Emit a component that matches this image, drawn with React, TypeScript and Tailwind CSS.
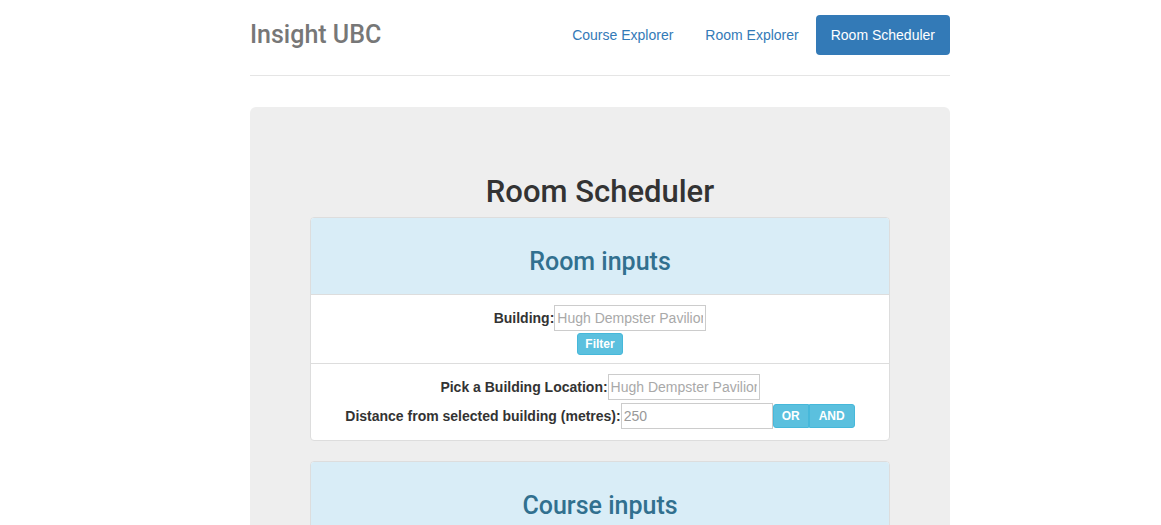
const navLinks = ["Course Explorer", "Room Explorer", "Room Scheduler"];

const headingFont = { fontFamily: 'Roboto, "Liberation Sans", Arial, sans-serif' };

function InfoButton({ label, className }: { label: string; className?: string }) {
  return (
    <button
      type="button"
      className={`bg-[#5bc0de] text-white font-bold text-[12px] leading-none border border-[#46b8da] ${className ?? ""}`}
    >
      {label}
    </button>
  );
}

function TextInput({ placeholder, value }: { placeholder?: string; value?: string }) {
  return (
    <input
      type="text"
      readOnly
      placeholder={placeholder}
      defaultValue={value}
      className="w-[152px] h-[26px] px-[2px] border border-[#ccc] text-[14px] text-[#999] placeholder:text-[#a9a9a9] bg-white outline-none"
    />
  );
}

function Panel({ title, children }: { title: string; children?: React.ReactNode }) {
  return (
    <div className="bg-white border border-[#ddd] rounded-[4px] overflow-hidden">
      <div className="bg-[#d9edf7] border-b border-[#ddd] pt-[30px] pb-[19px] text-center">
        <h3 className="text-[25px] leading-[27px] font-medium text-[#31708f]" style={headingFont}>
          {title}
        </h3>
      </div>
      {children}
    </div>
  );
}

export default function App() {
  return (
    <div
      className="min-h-screen bg-white text-[#333] text-[14px]"
      style={{ fontFamily: '"Liberation Sans", Arial, sans-serif' }}
    >
      <div className="ml-[250px] w-[700px]">
        <header className="flex items-center justify-between pt-[15px] pb-[20px] border-b border-[#e5e5e5]">
          <h3 className="text-[25px] leading-[40px] font-medium text-[#777]" style={headingFont}>
            Insight UBC
          </h3>
          <nav className="flex gap-[2px]">
            {navLinks.map((link, i) =>
              i === navLinks.length - 1 ? (
                <a
                  key={link}
                  className="h-[40px] px-[15px] flex items-center rounded-[4px] bg-[#337ab7] text-white"
                >
                  {link}
                </a>
              ) : (
                <a key={link} className="h-[40px] px-[15px] flex items-center text-[#337ab7]">
                  {link}
                </a>
              )
            )}
          </nav>
        </header>

        <main className="mt-[31px] bg-[#eee] rounded-[6px] px-[60px] pt-[48px] pb-[48px]">
          <h2
            className="mt-[20px] mb-[9px] text-[31px] leading-[33px] font-medium text-center text-[#333]"
            style={headingFont}
          >
            Room Scheduler
          </h2>

          <Panel title="Room inputs">
            <div className="flex flex-col items-center pt-[10px] pb-[8px] border-b border-[#ddd]">
              <div className="flex items-center">
                <label className="font-bold">Building:</label>
                <TextInput placeholder="Hugh Dempster Pavilion" />
              </div>
              <InfoButton label="Filter" className="mt-[2px] w-[46px] h-[22px] rounded-[3px]" />
            </div>
            <div className="flex flex-col items-center pt-[10px] pb-[11px] gap-[3px]">
              <div className="flex items-center">
                <label className="font-bold">Pick a Building Location:</label>
                <TextInput placeholder="Hugh Dempster Pavilion" />
              </div>
              <div className="flex items-center">
                <label className="font-bold">Distance from selected building (metres):</label>
                <TextInput value="250" />
                <InfoButton label="OR" className="w-[36px] h-[24px] rounded-l-[3px]" />
                <InfoButton label="AND" className="w-[46px] h-[24px] rounded-r-[3px]" />
              </div>
            </div>
          </Panel>

          <div className="mt-[20px]">
            <Panel title="Course inputs">
              <div className="h-[120px]" />
            </Panel>
          </div>
        </main>
      </div>
    </div>
  );
}
